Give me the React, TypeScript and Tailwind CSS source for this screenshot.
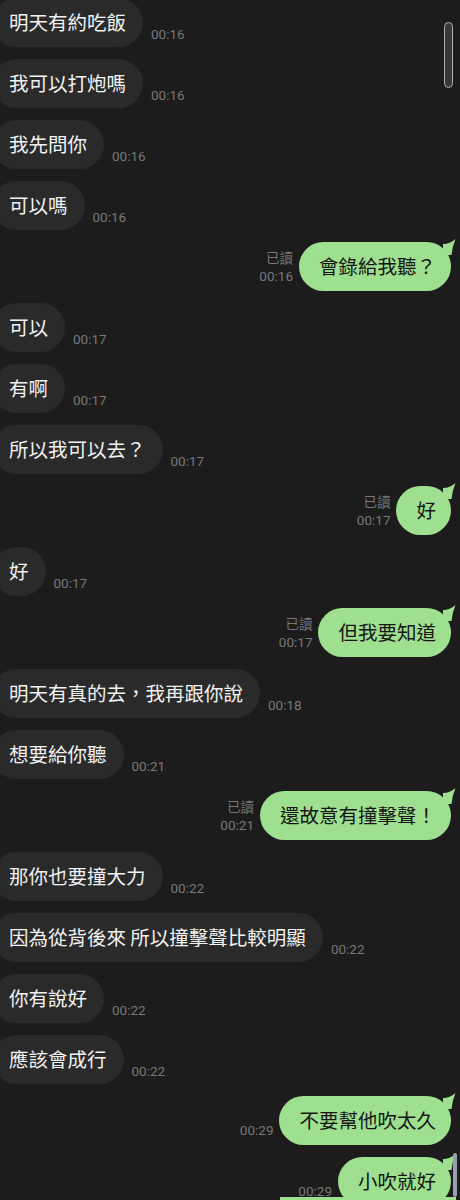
import React from "react";

type Msg = {
  side: "l" | "r";
  text: string;
  time: string;
  read?: boolean;
};

const messages: Msg[] = [
  { side: "l", text: "明天有約吃飯", time: "00:16" },
  { side: "l", text: "我可以打炮嗎", time: "00:16" },
  { side: "l", text: "我先問你", time: "00:16" },
  { side: "l", text: "可以嗎", time: "00:16" },
  { side: "r", text: "會錄給我聽？", time: "00:16", read: true },
  { side: "l", text: "可以", time: "00:17" },
  { side: "l", text: "有啊", time: "00:17" },
  { side: "l", text: "所以我可以去？", time: "00:17" },
  { side: "r", text: "好", time: "00:17", read: true },
  { side: "l", text: "好", time: "00:17" },
  { side: "r", text: "但我要知道", time: "00:17", read: true },
  { side: "l", text: "明天有真的去，我再跟你說", time: "00:18" },
  { side: "l", text: "想要給你聽", time: "00:21" },
  { side: "r", text: "還故意有撞擊聲！", time: "00:21", read: true },
  { side: "l", text: "那你也要撞大力", time: "00:22" },
  { side: "l", text: "因為從背後來 所以撞擊聲比較明顯", time: "00:22" },
  { side: "l", text: "你有說好", time: "00:22" },
  { side: "l", text: "應該會成行", time: "00:22" },
  { side: "r", text: "不要幫他吹太久", time: "00:29" },
  { side: "r", text: "小吹就好", time: "00:29" },
];

const cjk = "font-['Noto_Sans_CJK_TC','Noto_Sans',sans-serif]";
const meta = "font-['Roboto','Noto_Sans_CJK_TC',sans-serif] text-[13.5px] leading-[19px] text-[#787878]";

const Tail = () => (
  <svg
    className="absolute -top-[3px] -right-[5px]"
    width="13"
    height="16"
    viewBox="0 0 13 16"
  >
    <path d="M0 5 Q7 5 12.5 0 Q9.5 7 8.5 16 L0 16 Z" fill="#9ee08f" />
  </svg>
);

const Row = ({ m }: { m: Msg }) => {
  if (m.side === "l") {
    return (
      <div className="flex h-[49px] items-end">
        <div
          className={`-ml-[8px] flex h-[49px] items-center rounded-[25px] bg-[#2a2a2a] pl-[17px] pr-[17px] text-[19.5px] leading-none text-[#f2f2f2] whitespace-pre ${cjk}`}
        >
          {m.text}
        </div>
        <div className={`ml-[8px] pb-[3px] ${meta}`}>{m.time}</div>
      </div>
    );
  }
  return (
    <div className="flex h-[49px] items-end justify-end pr-[9px]">
      <div className={`mr-[6px] flex flex-col items-end pb-[5px] ${meta}`}>
        {m.read && <span className={cjk}>已讀</span>}
        <span>{m.time}</span>
      </div>
      <div
        className={`relative flex h-[49px] items-center rounded-[25px] bg-[#9ee08f] pl-[20px] pr-[15px] text-[19.5px] leading-none text-[#161616] whitespace-pre ${cjk}`}
      >
        {m.text}
        <Tail />
      </div>
    </div>
  );
};

export default function App() {
  return (
    <div className="relative h-[1200px] w-[460px] overflow-hidden bg-[#1c1c1c]">
      <div className="-mt-[2.5px] flex flex-col gap-[12px]">
        {messages.map((m, i) => (
          <Row key={i} m={m} />
        ))}
      </div>

      {/* scroll handle at the top */}
      <div className="absolute left-[444px] top-[22px] h-[66px] w-[9px] rounded-full border-[1.5px] border-[#b0b0b0] bg-[#383838]" />

      {/* stitched edge of the next screenshot */}
      <div className="absolute left-[280px] top-[1197px] h-[3px] w-[176px] bg-[#9ee08f]" />
      <div className="absolute left-[453px] top-[1153px] h-[44px] w-[4px] rounded-full bg-[#9a9fb6]" />
    </div>
  );
}
